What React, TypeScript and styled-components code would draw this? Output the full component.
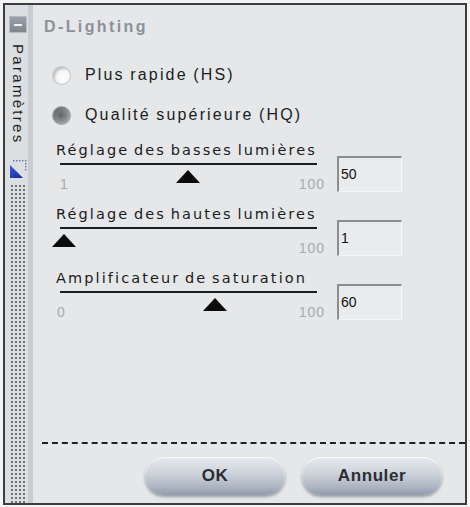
import React from 'react';
import styled, { createGlobalStyle } from 'styled-components';

const GlobalStyle = createGlobalStyle`
  html, body {
    margin: 0;
    padding: 0;
    background: #f4f4f4;
  }
  body {
    font-family: "Liberation Sans", Arial, sans-serif;
  }
`;

const Frame = styled.div`
  margin: 3px;
  width: 460px;
  height: 498px;
  border: 2px solid #3b3d40;
  display: flex;
  background: #e5e7e8;
  overflow: hidden;
`;

const Sidebar = styled.div`
  width: 23px;
  border-right: 5px solid #c9ccd0;
  background: #dcdfe1;
  display: flex;
  flex-direction: column;
  align-items: center;
  padding-top: 11px;
  flex-shrink: 0;
`;

const CollapseBox = styled.div`
  width: 16px;
  height: 15px;
  background: linear-gradient(#9aa0a8, #7f868e);
  border: 1px solid #b8bcc1;
  display: flex;
  align-items: center;
  justify-content: center;
  margin-left: 3px;

  &::after {
    content: '';
    width: 8px;
    height: 2px;
    background: #f2f3f4;
  }
`;

const SideTitle = styled.div`
  writing-mode: vertical-rl;
  font-size: 15px;
  letter-spacing: 2.3px;
  color: #1e1f21;
  margin-top: 11px;
  margin-left: 3px;
`;

const Grip = styled.div`
  flex: 1;
  width: 17px;
  margin-left: 3px;
  margin-top: 5px;
  background-image: radial-gradient(circle, #6c7178 0.9px, transparent 1.3px);
  background-size: 4px 4px;
`;

const Main = styled.div`
  flex: 1;
  display: flex;
  flex-direction: column;
  padding-top: 13px;
`;

const Title = styled.div`
  font-weight: bold;
  font-size: 16px;
  letter-spacing: 2.4px;
  color: #8c9198;
  margin-left: 11px;
  line-height: 18px;
`;

const Options = styled.div`
  display: flex;
  flex-direction: column;
  gap: 16px;
  margin: 27px 0 0 19px;
`;

const OptionRow = styled.label`
  display: flex;
  align-items: center;
  gap: 14px;
  height: 24px;
  font-size: 16px;
  letter-spacing: 2.15px;
  word-spacing: -1px;
  color: #1b1c1e;
`;

const Radio = styled.span<{ $checked?: boolean }>`
  width: 19px;
  height: 19px;
  border-radius: 50%;
  box-sizing: border-box;
  border: 1px solid ${p => (p.$checked ? '#9ea2a7' : '#c3c6ca')};
  background: ${p =>
    p.$checked
      ? 'radial-gradient(circle at 45% 45%, #5f6368 0%, #85898e 45%, #c3c6ca 100%)'
      : 'radial-gradient(circle at 60% 60%, #ffffff 0%, #f1f2f3 60%, #dcdee0 100%)'};
  box-shadow: inset 2px 2px 2px rgba(0, 0, 0, 0.18);
`;

const Sliders = styled.div`
  display: flex;
  flex-direction: column;
  gap: 11px;
  margin: 15px 0 0 23px;
`;

const SliderBlock = styled.div`
  display: flex;
  align-items: flex-start;
  gap: 12px;
`;

const Track = styled.div`
  width: 269px;
  display: flex;
  flex-direction: column;
`;

const SliderLabel = styled.div`
  font-family: "DejaVu Sans", Verdana, sans-serif;
  font-size: 14.5px;
  letter-spacing: 2.1px;
  word-spacing: -2px;
  line-height: 16px;
  color: #1a1b1d;
  white-space: nowrap;
`;

const Line = styled.div`
  margin: 5px 8px 0 4px;
  height: 2px;
  background: #1d1e20;
  position: relative;
`;

const Thumb = styled.div`
  position: absolute;
  top: 7px;
  width: 0;
  height: 0;
  border-left: 12px solid transparent;
  border-right: 12px solid transparent;
  border-bottom: 13px solid #0b0b0c;
  transform: translateX(-12px);
`;

const Scale = styled.div`
  display: flex;
  justify-content: space-between;
  height: 30px;
  align-items: flex-end;
  font-size: 14px;
  color: #a6aaae;
  letter-spacing: 1px;
  padding-bottom: 3px;
  box-sizing: border-box;
`;

const MinValue = styled.span<{ $offset: number }>`
  margin-left: ${p => p.$offset}px;
`;

const ValueBox = styled.div`
  margin-top: 14px;
  width: 65px;
  height: 36px;
  box-sizing: border-box;
  border-top: 2px solid #8a8e93;
  border-left: 2px solid #8a8e93;
  border-right: 1px solid #f6f7f8;
  border-bottom: 1px solid #f6f7f8;
  background: #e9ebec;
  font-size: 14px;
  color: #111;
  padding: 8px 0 0 2px;
`;

const Spacer = styled.div`
  flex: 1;
`;

const Footer = styled.div`
  margin-left: 9px;
  border-top: 2px dashed #202124;
  display: flex;
  justify-content: flex-end;
  gap: 17px;
  padding: 13px 23px 8px 0;
`;

const Button = styled.button`
  width: 140px;
  height: 38px;
  border-radius: 19px;
  border: none;
  background: linear-gradient(#e6e9ee 0%, #d0d5dd 40%, #b1b8c5 75%, #939cad 100%);
  box-shadow: 0 2px 3px rgba(60, 66, 78, 0.45), inset 0 1px 1px rgba(255, 255, 255, 0.8);
  font-family: "Liberation Sans", Arial, sans-serif;
  font-weight: bold;
  font-size: 17px;
  letter-spacing: 0.6px;
  color: #2a2d33;
  cursor: pointer;
`;

const ResetIcon = () => (
  <svg width="18" height="20" viewBox="0 0 18 20" style={{ marginTop: 14, marginLeft: 3 }}>
    {[4, 7, 10, 13, 16].map(x => (
      <rect key={'t' + x} x={x} y={1} width="1.4" height="1.4" fill="#5a6fb0" />
    ))}
    {[4, 7, 10].map(y => (
      <rect key={'r' + y} x={16} y={y} width="1.4" height="1.4" fill="#5a6fb0" />
    ))}
    <defs>
      <linearGradient id="blu" x1="0" y1="0" x2="1" y2="1">
        <stop offset="0" stopColor="#3a5ed8" />
        <stop offset="1" stopColor="#10269a" />
      </linearGradient>
    </defs>
    <polygon points="1,6 1,19 14,19" fill="url(#blu)" />
  </svg>
);

type SliderProps = {
  label: string;
  min: number;
  max: number;
  value: number;
  minOffset: number;
};

const Slider: React.FC<SliderProps> = ({ label, min, max, value, minOffset }) => {
  const pct = ((value - min) / (max - min)) * 100;
  return (
    <SliderBlock>
      <Track>
        <SliderLabel>{label}</SliderLabel>
        <Line>
          <Thumb style={{ left: `calc(${pct}% + ${value === min ? 4 : 1}px)` }} />
        </Line>
        <Scale>
          <MinValue $offset={minOffset}>{value === min ? '' : min}</MinValue>
          <span>{max}</span>
        </Scale>
      </Track>
      <ValueBox>{value}</ValueBox>
    </SliderBlock>
  );
};

export default function App() {
  return (
    <>
      <GlobalStyle />
      <Frame>
        <Sidebar>
          <CollapseBox />
          <SideTitle>Paramètres</SideTitle>
          <ResetIcon />
          <Grip />
        </Sidebar>
        <Main>
          <Title>D-Lighting</Title>
          <Options>
            <OptionRow>
              <Radio />
              Plus rapide (HS)
            </OptionRow>
            <OptionRow>
              <Radio $checked />
              Qualité supérieure (HQ)
            </OptionRow>
          </Options>
          <Sliders>
            <Slider label="Réglage des basses lumières" min={1} max={100} value={50} minOffset={4} />
            <Slider label="Réglage des hautes lumières" min={1} max={100} value={1} minOffset={4} />
            <Slider label="Amplificateur de saturation" min={0} max={100} value={60} minOffset={1} />
          </Sliders>
          <Spacer />
          <Footer>
            <Button>OK</Button>
            <Button>Annuler</Button>
          </Footer>
        </Main>
      </Frame>
    </>
  );
}
